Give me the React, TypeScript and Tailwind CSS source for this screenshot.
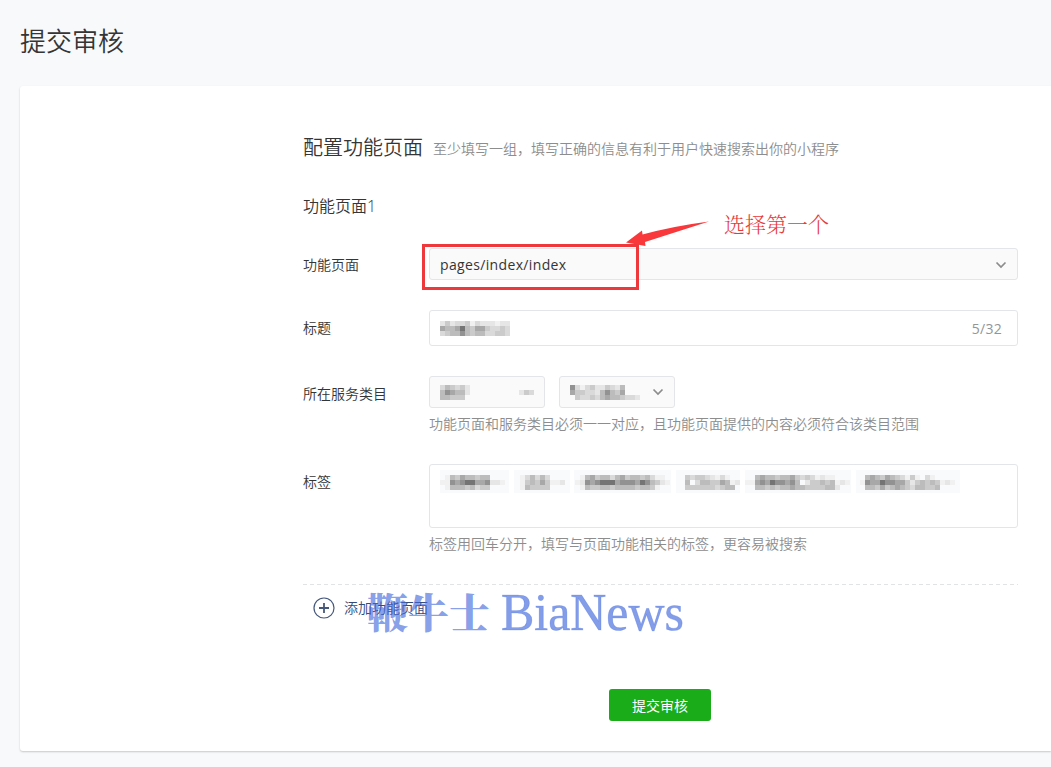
import React from "react";

const SHADES: Record<string, string> = {
  "0": "transparent",
  "1": "#f1f1f1",
  "2": "#e6e6e6",
  "3": "#dadada",
  "4": "#cbcbcb",
  "5": "#bcbcbc",
  "6": "#a8a8a8",
  "7": "#929292",
  "8": "#747474",
};

function Mosaic({ rows }: { rows: string[] }) {
  return (
    <span className="flex flex-col">
      {rows.map((row, i) => (
        <span key={i} className="flex">
          {row.split("").map((c, j) => (
            <span key={j} className="h-[5px] w-[5px]" style={{ background: SHADES[c] }} />
          ))}
        </span>
      ))}
    </span>
  );
}

function Chevron() {
  return (
    <svg width="12" height="8" viewBox="0 0 12 8" fill="none" stroke="#8c8c8c" strokeWidth="1.7">
      <path d="M1.5 1.5 L6 6 L10.5 1.5" />
    </svg>
  );
}

const TAGS = [
  { box: "w-[69px]", rows: ["0154655455000", "1176788667221", "0155545344000"] },
  { box: "w-[56px] ml-[5px] pl-px", rows: ["0135353000", "0145464112", "0154444000"] },
  { box: "w-[97px] ml-1 pl-px", rows: ["0156455356455453110", "1276788867776875421", "0154455455554554100"] },
  { box: "w-[64px] ml-[5px] pl-1", rows: ["043443213100", "050355446512", "044444434550"] },
  { box: "w-[106px] ml-[5px]", rows: ["005655455643431211000", "116768776750244545121", "005545455655444455200"] },
  { box: "w-[104px] ml-[5px] pl-1", rows: ["0565465431410310000", "1766877664245454121", "0554645654355445000"] },
];

export default function App() {
  return (
    <div className="h-[767px] w-[1051px] overflow-hidden bg-[#f8f9fb] pl-5 font-['Open_Sans','Noto_Sans_CJK_SC',sans-serif] text-sm text-[#353535]">
      <h1 className="flex h-[86px] items-start pt-[22px] text-[26px] leading-[39px] font-[350]">提交审核</h1>
      <main className="h-[665px] rounded-l-[3px] bg-white pt-[44px] pl-[283px] shadow-[0_1px_2px_rgba(0,0,0,0.2)]">
        <div className="w-[715px]">
          <div className="flex h-[36px] items-center">
            <h2 className="w-[130px] text-[20px] leading-9 font-[350]">配置功能页面</h2>
            <p className="pt-0.5 font-[350] whitespace-nowrap text-[#8d8d8d]">至少填写一组，填写正确的信息有利于用户快速搜索出你的小程序</p>
          </div>
          <h3 className="mt-7 h-6 text-base leading-6 font-[350]">功能页面1</h3>

          <div className="mt-[30px] flex h-8 items-center">
            <div className="w-[126px] pt-0.5 font-[350]">功能页面</div>
            <div className="relative flex h-8 flex-1 items-center justify-between rounded-[3px] border border-[#e4e5e8] bg-[#fafafa] pr-[10px] pl-[10px]">
              <span className="pt-px tracking-[0.35px]">pages/index/index</span>
              <span className="pt-0.5"><Chevron /></span>
              <div className="absolute top-[-5px] left-[-8px] h-[46px] w-[217px] border-[3px] border-[#ee383c]" />
              <svg className="absolute top-[-29px] left-[196px]" width="86" height="28" viewBox="0 0 86 28">
                <path d="M0 22.5 L16 10.5 L16.5 14.5 Q48 6 83 1.5 Q50 12 19 22 L19.5 26 Z" fill="#f8383b" />
              </svg>
              <span className="absolute top-[-42px] left-[294px] font-['Noto_Serif_CJK_SC','Noto_Sans_CJK_SC',serif] text-[21px] leading-8 font-light whitespace-nowrap text-[#e83a3e]">选择第一个</span>
            </div>
          </div>

          <div className="mt-[30px] flex h-9 items-center">
            <div className="w-[126px] font-[350]">标题</div>
            <div className="flex h-9 flex-1 items-center justify-between rounded-[3px] border border-[#e4e5e8] pr-[15px] pl-[10px]">
              <Mosaic rows={["24233413222122", "65568546643343", "34557545533443"]} />
              <span className="pt-px tracking-[0.3px] text-[#959595]">5/32</span>
            </div>
          </div>

          <div className="mt-[30px] flex h-8">
            <div className="w-[126px] pt-2 font-[350]">所在服务类目</div>
            <div className="flex h-8 w-[116px] items-center justify-between rounded-[3px] border border-[#e4e5e8] bg-[#fafafa] px-[10px]">
              <Mosaic rows={["354342", "576552", "554440"]} />
              <Mosaic rows={["000", "243", "000"]} />
            </div>
            <div className="ml-[14px] flex h-8 w-[116px] items-center justify-between rounded-[3px] border border-[#e4e5e8] bg-[#fafafa] px-[10px]">
              <Mosaic rows={["73134224325000", "64433257546000", "04334356554332"]} />
              <Chevron />
            </div>
          </div>
          <p className="ml-[126px] h-8 leading-8 font-[350] whitespace-nowrap text-[#8d8d8d]">功能页面和服务类目必须一一对应，且功能页面提供的内容必须符合该类目范围</p>

          <div className="mt-6 flex h-16">
            <div className="w-[126px] pt-2 font-[350]">标签</div>
            <div className="flex flex-1 items-start rounded-[3px] border border-[#e4e5e8] pt-[5px] pl-[10px]">
              {TAGS.map((tag, i) => (
                <span key={i} className={`flex h-[23px] shrink-0 items-start overflow-hidden bg-[#f9fafb] pt-[5px] ${tag.box}`}>
                  <Mosaic rows={tag.rows} />
                </span>
              ))}
            </div>
          </div>
          <p className="ml-[126px] h-8 leading-8 font-[350] whitespace-nowrap text-[#8d8d8d]">标签用回车分开，填写与页面功能相关的标签，更容易被搜索</p>

          <div className="mt-6 h-px bg-[repeating-linear-gradient(90deg,#e2e3e5_0_4px,transparent_4px_7px)]" />
          <div className="relative flex h-[47px] items-center pl-[10px]">
            <svg className="-mt-0.5" width="22" height="22" viewBox="0 0 22 22" fill="none" stroke="#45587c">
              <circle cx="11" cy="11" r="10" strokeWidth="1.2" />
              <path d="M6 11H16M11 6V16" strokeWidth="1.8" />
            </svg>
            <span className="-mt-px ml-[9px] font-[350] text-[#344b78]">添加功能页面</span>
            <svg className="absolute top-0 left-[60px] overflow-visible" width="330" height="60" viewBox="0 0 330 60" fill="#4169dc" fillOpacity="0.65">
              <text x="4" y="43" fontSize="41" fontWeight="900" textLength="123" lengthAdjust="spacingAndGlyphs" fontFamily="Noto Serif CJK SC, Noto Sans CJK SC, serif">鞭牛士</text>
              <text x="138" y="44.5" fontSize="52" textLength="183" lengthAdjust="spacingAndGlyphs" stroke="#4169dc" strokeOpacity="0.4" strokeWidth="0.7" fontFamily="Liberation Serif, serif">BiaNews</text>
            </svg>
          </div>
          <button className="mt-[57px] ml-[306px] block h-8 w-[102px] rounded-[3px] bg-[#1aad19] pt-0.5 text-sm text-white">提交审核</button>
        </div>
      </main>
    </div>
  );
}
